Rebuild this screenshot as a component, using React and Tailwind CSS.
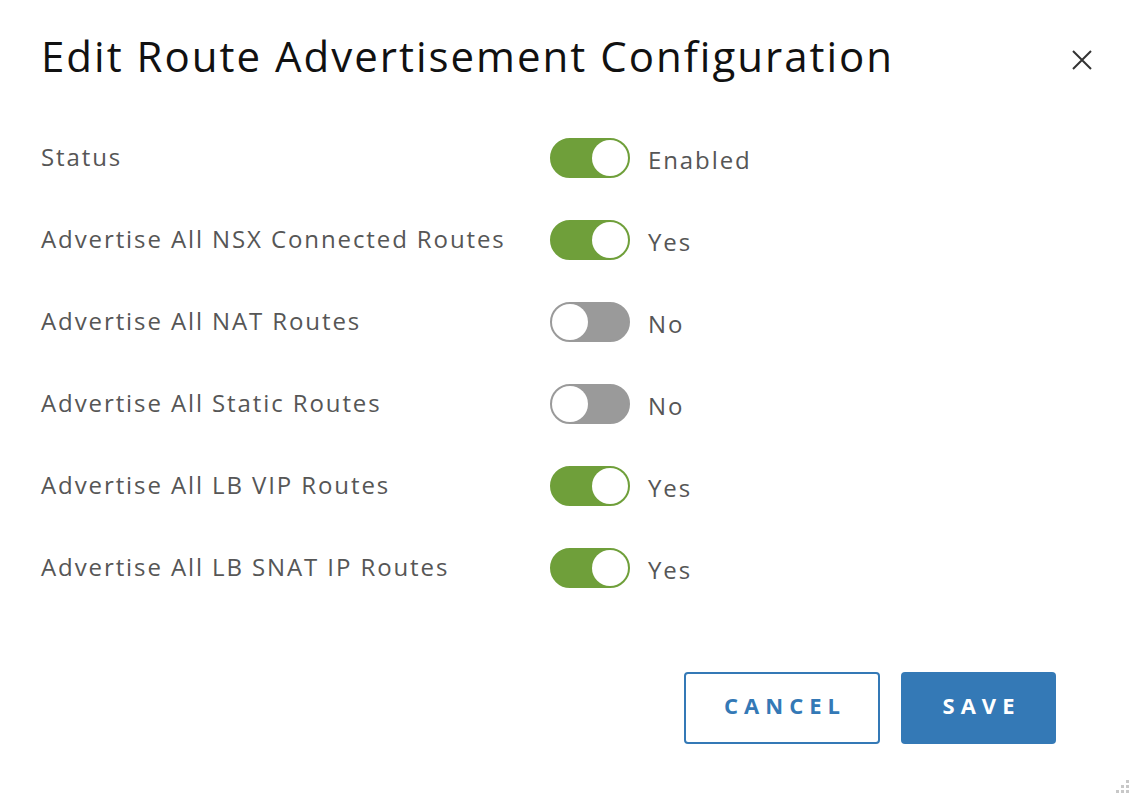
import { useState } from "react";

const rows = [
  { label: "Status", on: true, onText: "Enabled", offText: "Disabled" },
  { label: "Advertise All NSX Connected Routes", on: true },
  { label: "Advertise All NAT Routes", on: false },
  { label: "Advertise All Static Routes", on: false },
  { label: "Advertise All LB VIP Routes", on: true },
  { label: "Advertise All LB SNAT IP Routes", on: true },
];

function Toggle({ on, onClick }) {
  return (
    <button
      type="button"
      onClick={onClick}
      className={
        "relative h-[40px] w-[80px] shrink-0 rounded-full border-2 " +
        (on ? "border-[#6f9f3a] bg-[#6f9f3a]" : "border-[#9a9a9a] bg-[#9a9a9a]")
      }
    >
      <span
        className={
          "absolute top-0 h-[36px] w-[36px] rounded-full bg-white " +
          (on ? "right-0" : "left-0")
        }
      />
    </button>
  );
}

export default function App() {
  const [state, setState] = useState(rows.map((r) => r.on));

  return (
    <div
      className="relative h-[800px] w-[1134px] overflow-hidden bg-white text-[#565656]"
      style={{ fontFamily: "'Open Sans', Lato, sans-serif" }}
    >
      {/* Header */}
      <div className="flex items-start justify-between pl-[41px] pr-[42px] pt-[26px]">
        <h1 className="text-[42px] leading-[60px] tracking-[2px] text-[#111]">
          Edit Route Advertisement Configuration
        </h1>
        <button type="button" className="mt-[24px] text-[#333]">
          <svg width="20" height="20" viewBox="0 0 20 20" fill="none" stroke="currentColor" strokeWidth="2">
            <path d="M1 1 L19 19 M19 1 L1 19" />
          </svg>
        </button>
      </div>

      {/* Rows */}
      <div className="mt-[52px] flex flex-col gap-[42px] pl-[41px]">
        {rows.map((r, i) => (
          <div key={r.label} className="flex items-center">
            <div className="w-[509px] -mt-[2px] text-[24px] tracking-[1.9px]">{r.label}</div>
            <Toggle
              on={state[i]}
              onClick={() => setState((s) => s.map((v, j) => (j === i ? !v : v)))}
            />
            <div className="ml-[18px] mt-[3px] text-[24px] tracking-[1.9px]">
              {state[i] ? r.onText || "Yes" : r.offText || "No"}
            </div>
          </div>
        ))}
      </div>

      {/* Footer */}
      <div className="mt-[84px] flex justify-end gap-[21px] pr-[78px]">
        <button
          type="button"
          className="h-[72px] w-[196px] rounded-[4px] border-2 border-[#3479b6] bg-white pb-[5px] pl-[6px] text-[22px] font-bold tracking-[6px] text-[#3479b6]"
        >
          CANCEL
        </button>
        <button
          type="button"
          className="h-[72px] w-[155px] rounded-[4px] bg-[#3479b6] pb-[5px] pl-[6px] text-[22px] font-bold tracking-[6px] text-white"
        >
          SAVE
        </button>
      </div>

      {/* Resize grip */}
      <svg className="absolute bottom-[2px] right-[2px]" width="20" height="20" viewBox="0 0 20 20">
        <g fill="#c8c8c8">
          <rect x="14" y="2" width="3" height="3" />
          <rect x="9" y="7" width="3" height="3" />
          <rect x="14" y="7" width="3" height="3" />
          <rect x="4" y="12" width="3" height="3" />
          <rect x="9" y="12" width="3" height="3" />
          <rect x="14" y="12" width="3" height="3" />
        </g>
      </svg>
    </div>
  );
}
